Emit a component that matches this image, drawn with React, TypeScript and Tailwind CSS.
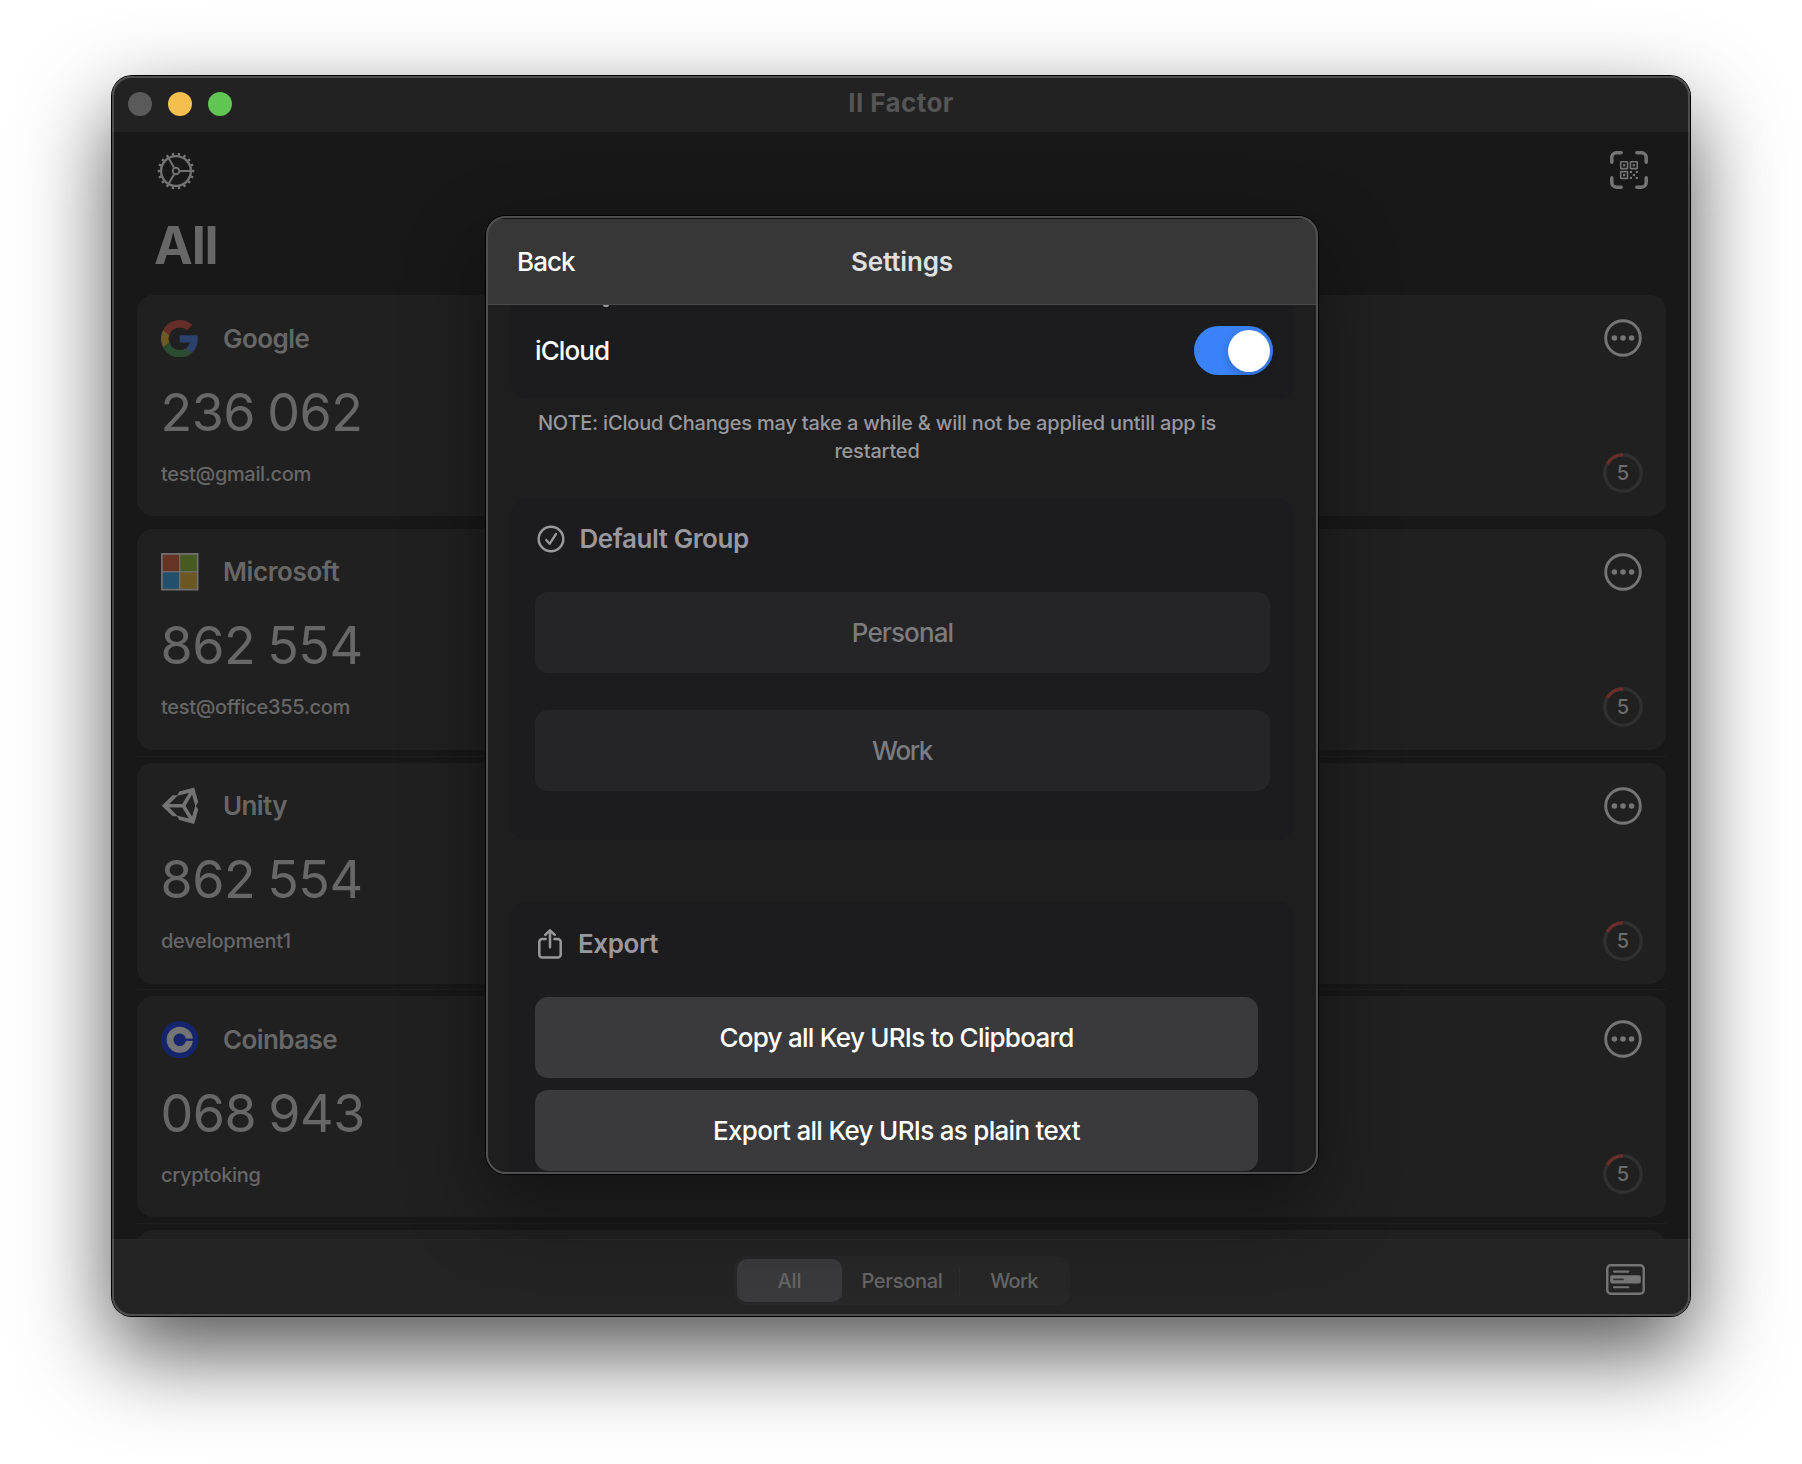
import React from "react";

function GearIcon() {
  const teeth = Array.from({ length: 18 }, (_, i) => i * 20);
  return (
    <svg width="38" height="38" viewBox="-19 -19 38 38" fill="none" stroke="#727272">
      <circle r="14.9" strokeWidth="2.4" />
      {teeth.map((a) => (
        <path key={a} d="M15.5 0H18.3" strokeWidth="2.4" transform={`rotate(${a})`} />
      ))}
      <circle r="3.3" strokeWidth="1.9" />
      {[0, 120, 240].map((a) => (
        <path key={a} d="M4 0H15" strokeWidth="2" transform={`rotate(${a})`} />
      ))}
    </svg>
  );
}

function ScanIcon() {
  return (
    <svg width="38" height="38" viewBox="0 0 38 38" fill="none" stroke="#747474">
      <path
        d="M1.8 11.2V6.3a4.5 4.5 0 0 1 4.5-4.5H11.2M26.8 1.8h4.9a4.5 4.5 0 0 1 4.5 4.5v4.9M36.2 26.8v4.9a4.5 4.5 0 0 1-4.5 4.5h-4.9M11.2 36.2H6.3a4.5 4.5 0 0 1-4.5-4.5v-4.9"
        strokeWidth="3.5"
        strokeLinecap="round"
      />
      <g strokeWidth="1.6">
        <rect x="10.7" y="10.8" width="6.8" height="6.8" rx=".5" />
        <rect x="20.4" y="10.8" width="6.8" height="6.8" rx=".5" />
        <rect x="10.7" y="20.6" width="6.8" height="6.8" rx=".5" />
      </g>
      <g fill="#747474" stroke="none">
        <rect x="13" y="13.1" width="2.2" height="2.2" />
        <rect x="22.7" y="13.1" width="2.2" height="2.2" />
        <rect x="13" y="22.9" width="2.2" height="2.2" />
        <rect x="19.9" y="19.9" width="2.1" height="2.1" />
        <rect x="25.8" y="19.9" width="2.1" height="2.1" />
        <rect x="22.8" y="22.9" width="2.2" height="2.2" />
        <rect x="19.9" y="25.9" width="2.1" height="2.1" />
        <rect x="25.8" y="25.9" width="2.1" height="2.1" />
      </g>
    </svg>
  );
}

function GoogleLogo() {
  return (
    <svg width="37.5" height="37.5" viewBox="1 1 22 22">
      <path fill="#2c406e" d="M22.56 12.25c0-.78-.07-1.53-.2-2.25H12v4.26h5.92c-.26 1.37-1.04 2.53-2.21 3.31v2.77h3.57c2.08-1.92 3.28-4.74 3.28-8.09z" />
      <path fill="#2c4c31" d="M12 23c2.97 0 5.46-.98 7.28-2.66l-3.57-2.77c-.98.66-2.23 1.06-3.71 1.06-2.86 0-5.29-1.93-6.16-4.53H2.18v2.84C3.99 20.53 7.7 23 12 23z" />
      <path fill="#6d5826" d="M5.84 14.09c-.22-.66-.35-1.36-.35-2.09s.13-1.43.35-2.09V7.07H2.18C1.43 8.55 1 10.22 1 12s.43 3.45 1.18 4.93l2.85-2.22.81-.62z" />
      <path fill="#662e29" d="M12 5.38c1.62 0 3.06.56 4.21 1.64l3.15-3.15C17.45 2.09 14.97 1 12 1 7.7 1 3.99 3.47 2.18 7.07l3.66 2.84c.87-2.6 3.3-4.53 6.16-4.53z" />
    </svg>
  );
}

function MicrosoftLogo() {
  return (
    <svg width="37.5" height="37.5" viewBox="0 0 37.5 37.5">
      <rect width="37.5" height="37.5" fill="#6f6f6f" />
      <rect x="1.8" y="1.8" width="16.3" height="16.3" fill="#683322" />
      <rect x="19.4" y="1.8" width="16.3" height="16.3" fill="#465a22" />
      <rect x="1.8" y="19.4" width="16.3" height="16.3" fill="#224f6b" />
      <rect x="19.4" y="19.4" width="16.3" height="16.3" fill="#6c5622" />
    </svg>
  );
}

function UnityLogo() {
  return (
    <svg width="37.5" height="37.5" viewBox="6 8 496 496">
      <path
        fill="#737373"
        d="M498.11 206.4 445.31 14.72 248.2 66.08 219 116.14l-59.2-.43L15.54 256l144.28 140.32 59.17-.43 29.24 50 197.08 51.36 52.8-191.62-30-49.63ZM223.77 124.2 374.55 86.51 288 232.33H114.87Zm0 263.63L114.87 279.71H288l86.55 145.81Zm193 14L330.17 256l86.58-145.84L458.56 256Z"
      />
    </svg>
  );
}

function CoinbaseLogo() {
  return (
    <svg width="37.5" height="37.5" viewBox="0 0 37.5 37.5">
      <circle cx="18.75" cy="18.75" r="18.6" fill="#16246e" />
      <circle cx="18.75" cy="18.75" r="9.7" fill="none" stroke="#747474" strokeWidth="6.8" />
      <rect x="23" y="17.6" width="10" height="2.3" fill="#16246e" />
    </svg>
  );
}

function MoreIcon() {
  return (
    <svg width="38" height="38" viewBox="0 0 38 38" fill="#757575">
      <circle cx="19" cy="19" r="17.3" fill="none" stroke="#757575" strokeWidth="2.9" />
      <circle cx="10.4" cy="19" r="2.8" />
      <circle cx="19" cy="19" r="2.8" />
      <circle cx="27.6" cy="19" r="2.8" />
    </svg>
  );
}

function Timer() {
  return (
    <div className="relative -mt-px flex h-10 w-10 items-center justify-center">
      <svg className="absolute inset-0" width="40" height="40" viewBox="-20 -20 40 40" fill="none" strokeWidth="3.3">
        <circle r="18.2" stroke="#303030" />
        <path d="M-15.76 -9.1A18.2 18.2 0 0 1 0 -18.2" stroke="#6a2e28" />
      </svg>
      <span className="relative text-[20px] leading-none font-[500] text-[#6c6c6c]">5</span>
    </div>
  );
}

function CardsIcon() {
  return (
    <svg width="39" height="31" viewBox="0 0 39 31" fill="none" stroke="#757575">
      <rect x="1.3" y="1.3" width="36.4" height="28.4" rx="3.4" strokeWidth="2.4" />
      <path d="M8 7.6H22.4M8 23.3H22.4" strokeWidth="2.1" strokeLinecap="round" />
      <rect x="4.2" y="11.2" width="30.6" height="8.4" rx="1.8" fill="#757575" stroke="none" />
      <path d="M8 15.4H17" stroke="#323232" strokeWidth="1.8" strokeLinecap="round" />
    </svg>
  );
}

function CheckCircleIcon() {
  return (
    <svg width="28" height="28" viewBox="0 0 28 28" fill="none" stroke="#98989d" strokeLinecap="round" strokeLinejoin="round">
      <circle cx="14" cy="14" r="12.3" strokeWidth="2.5" />
      <path d="M9.2 15L12.6 18.8L19 9" strokeWidth="2.3" />
    </svg>
  );
}

function ShareIcon() {
  return (
    <svg width="24" height="30" viewBox="0 0 24 30" fill="none" stroke="#98989d" strokeWidth="2.5" strokeLinecap="round" strokeLinejoin="round">
      <path d="M7.6 9.9H4.3A3 3 0 0 0 1.3 12.9V25.6A3 3 0 0 0 4.3 28.6H19.7A3 3 0 0 0 22.7 25.6V12.9A3 3 0 0 0 19.7 9.9H16.4" />
      <path d="M12 18.2V1.6M7.3 5.9L12 1.3L16.7 5.9" />
    </svg>
  );
}

const accounts = [
  { name: "Google", code: "236 062", user: "test@gmail.com", logo: <GoogleLogo />, tracking: "tracking-[-0.56px]", userTracking: "tracking-[-0.34px]" },
  { name: "Microsoft", code: "862 554", user: "test@office355.com", logo: <MicrosoftLogo />, tracking: "tracking-[-0.4px]", userTracking: "tracking-[-0.32px]" },
  { name: "Unity", code: "862 554", user: "development1", logo: <UnityLogo />, tracking: "tracking-[-0.6px]", userTracking: "tracking-[-0.24px]" },
  { name: "Coinbase", code: "068 943", user: "cryptoking", logo: <CoinbaseLogo />, tracking: "tracking-[-0.6px]", userTracking: "tracking-[-0.32px]" },
];

function AccountCard({ account }: { account: (typeof accounts)[number] }) {
  return (
    <div className="h-[221px] rounded-[16px] bg-[#202020] pr-[23px] pl-6 text-[#676767]">
      <div className="flex h-[86px] items-center justify-between">
        <div className="flex items-center gap-[24.5px]">
          {account.logo}
          <span className={`text-[26px] font-semibold ${account.tracking}`}>{account.name}</span>
        </div>
        <div className="mr-px">
          <MoreIcon />
        </div>
      </div>
      <div className="-ml-[0.5px] flex h-[61px] items-center pt-[2px] text-[52px] leading-none font-[430] tracking-[-0.5px] whitespace-pre [word-spacing:-2px]">
        {account.code}
      </div>
      <div className="flex h-[63px] items-center justify-between">
        <span className={`text-[20px] font-[450] ${account.userTracking}`}>{account.user}</span>
        <Timer />
      </div>
    </div>
  );
}

function SettingsSheet() {
  return (
    <div className="absolute top-[140px] left-[374px] h-[958px] w-[832px] rounded-[20px] shadow-[0_0_0_1px_#000,0_30px_80px_rgba(0,0,0,0.42)]">
      <div className="flex h-full flex-col overflow-hidden rounded-[20px] bg-[#1e1e1e]">
        <div className="grid h-[89px] shrink-0 grid-cols-3 items-center border-b border-[#494949] bg-[#373737] px-[31px] pt-[2px] text-[26px] shadow-[inset_0_3px_0_#101010]">
          <span className="font-[450] tracking-[-0.95px] text-white">Back</span>
          <span className="text-center font-semibold tracking-[-0.16px] text-[#e0e0e0]">Settings</span>
        </div>
        <div className="flex min-h-0 flex-1 flex-col pr-[24px] pl-[25px]">
          <div className="relative h-[94px] shrink-0 rounded-b-[16px] bg-[#1c1c1e] pr-[21px] pl-6">
            <span className="absolute top-0 left-[92px] h-[1.5px] w-[6px] rounded-b bg-[#98989d]" />
            <div className="flex h-[91px] items-center justify-between">
              <span className="text-[26px] font-[450] tracking-[-0.9px] text-white">iCloud</span>
              <div className="flex h-[49px] w-[79px] items-center justify-end rounded-full bg-[#3a82f7] pr-[3px]">
                <div className="h-[42px] w-[42px] rounded-full bg-white shadow-[0_3px_8px_rgba(0,0,0,0.2)]" />
              </div>
            </div>
          </div>
          <p className="mt-[10px] w-[732px] shrink-0 text-center text-[20px] leading-[28px] font-[450] tracking-[-0.2px] text-[#98989d]">
            NOTE: iCloud Changes may take a while &amp; will not be applied untill app is restarted
          </p>
          <section className="mt-[34px] h-[341px] shrink-0 rounded-[16px] bg-[#1c1c1e] pr-[24px] pl-6">
            <div className="mb-[13px] flex h-[80px] items-center gap-[14.5px] pl-[2px]">
              <CheckCircleIcon />
              <h2 className="-mt-px text-[26px] font-semibold tracking-[-0.42px] text-[#98989d]">Default Group</h2>
            </div>
            <div className="flex flex-col gap-[37px] text-[26px] font-[450] text-[#7c7c7e]">
              <button className="h-[81px] rounded-[13px] bg-[#252527] tracking-[-0.9px]">Personal</button>
              <button className="h-[81px] rounded-[13px] bg-[#252527] pr-px tracking-[-1.4px]">Work</button>
            </div>
          </section>
          <section className="mt-[62px] h-[400px] shrink-0 rounded-[16px] bg-[#1c1c1e] pr-[36px] pl-6">
            <div className="mb-[12px] flex h-[83px] items-center gap-4 pl-[3px]">
              <ShareIcon />
              <h2 className="text-[26px] font-semibold tracking-[-0.42px] text-[#98989d]">Export</h2>
            </div>
            <div className="flex flex-col gap-3 text-[26px] font-[450] text-white">
              <button className="h-[81px] rounded-[13px] bg-[#3a3a3c] tracking-[-0.75px]">Copy all Key URIs to Clipboard</button>
              <button className="h-[81px] rounded-[13px] bg-[#3a3a3c] tracking-[-0.7px]">Export all Key URIs as plain text</button>
            </div>
          </section>
        </div>
      </div>
      <div className="pointer-events-none absolute inset-0 rounded-[20px] border-2 border-[#505050]" />
    </div>
  );
}

export default function App() {
  return (
    <div className="flex h-[1464px] w-[1802px] justify-center overflow-hidden bg-white pt-[76px] font-['Inter',sans-serif]">
      <div className="relative h-[1240px] w-[1578px] rounded-[20px] shadow-[0_0_0_1px_#000,0_36px_88px_rgba(0,0,0,0.68)]">
        <div className="relative flex h-full flex-col overflow-hidden rounded-[20px] bg-[#181818]">
          <header className="grid h-14 shrink-0 grid-cols-3 items-center bg-[#222222] pr-4 pl-4">
            <div className="flex gap-4">
              <span className="h-6 w-6 rounded-full bg-[#5a5a5a]" />
              <span className="h-6 w-6 rounded-full bg-[#f5bf4f]" />
              <span className="h-6 w-6 rounded-full bg-[#61c554]" />
            </div>
            <h1 className="-mt-1 text-center text-[26px] font-bold tracking-[0.42px] text-[#555555]">II Factor</h1>
          </header>

          <main className="flex min-h-0 flex-1 flex-col overflow-hidden pr-6 pl-[25px]">
            <div className="flex h-[77px] shrink-0 items-center justify-between pr-[18px] pl-5">
              <GearIcon />
              <div className="-mt-0.5">
                <ScanIcon />
              </div>
            </div>
            <div className="mb-[14.33px] flex h-[72px] shrink-0 items-center pt-[2px] pl-[17px] text-[52px] leading-none font-bold tracking-[-1.16px] text-[#676767]">
              All
            </div>
            {accounts.map((a, i) => (
              <div key={a.name} className="shrink-0">
                <AccountCard account={a} />
                <div className="flex h-[12.67px] items-center">
                  {i > 0 && <div className="h-px w-full bg-[#1f1f1f]" />}
                </div>
              </div>
            ))}
            <div className="h-[60px] shrink-0 rounded-[16px] bg-[#202020]" />
          </main>

          <footer className="grid h-[77px] shrink-0 grid-cols-3 items-center border-t border-[#272727] bg-[#232323] px-[45px] pt-[3px]">
            <div />
            <div className="mx-auto flex h-[49px] w-[336px] translate-x-px translate-y-px items-center rounded-[12px] bg-[#272727] px-[3px] text-[20px] text-[#656565]">
              <div className="flex h-[43px] w-[105px] items-center justify-center rounded-[10px] bg-[#3a3a3c] font-medium tracking-[-0.11px]">All</div>
              <div className="flex w-[117px] items-center justify-center pl-[3px] font-[450] tracking-[-0.3px]">Personal</div>
              <div className="h-7 w-px bg-[#2e2e30]" />
              <div className="flex flex-1 items-center justify-center pl-px font-[450] tracking-[-0.7px]">Work</div>
            </div>
            <div className="flex justify-end">
              <CardsIcon />
            </div>
          </footer>

          <SettingsSheet />
        </div>
        <div className="pointer-events-none absolute inset-0 rounded-[20px] border-2 border-white/20" />
      </div>
    </div>
  );
}
